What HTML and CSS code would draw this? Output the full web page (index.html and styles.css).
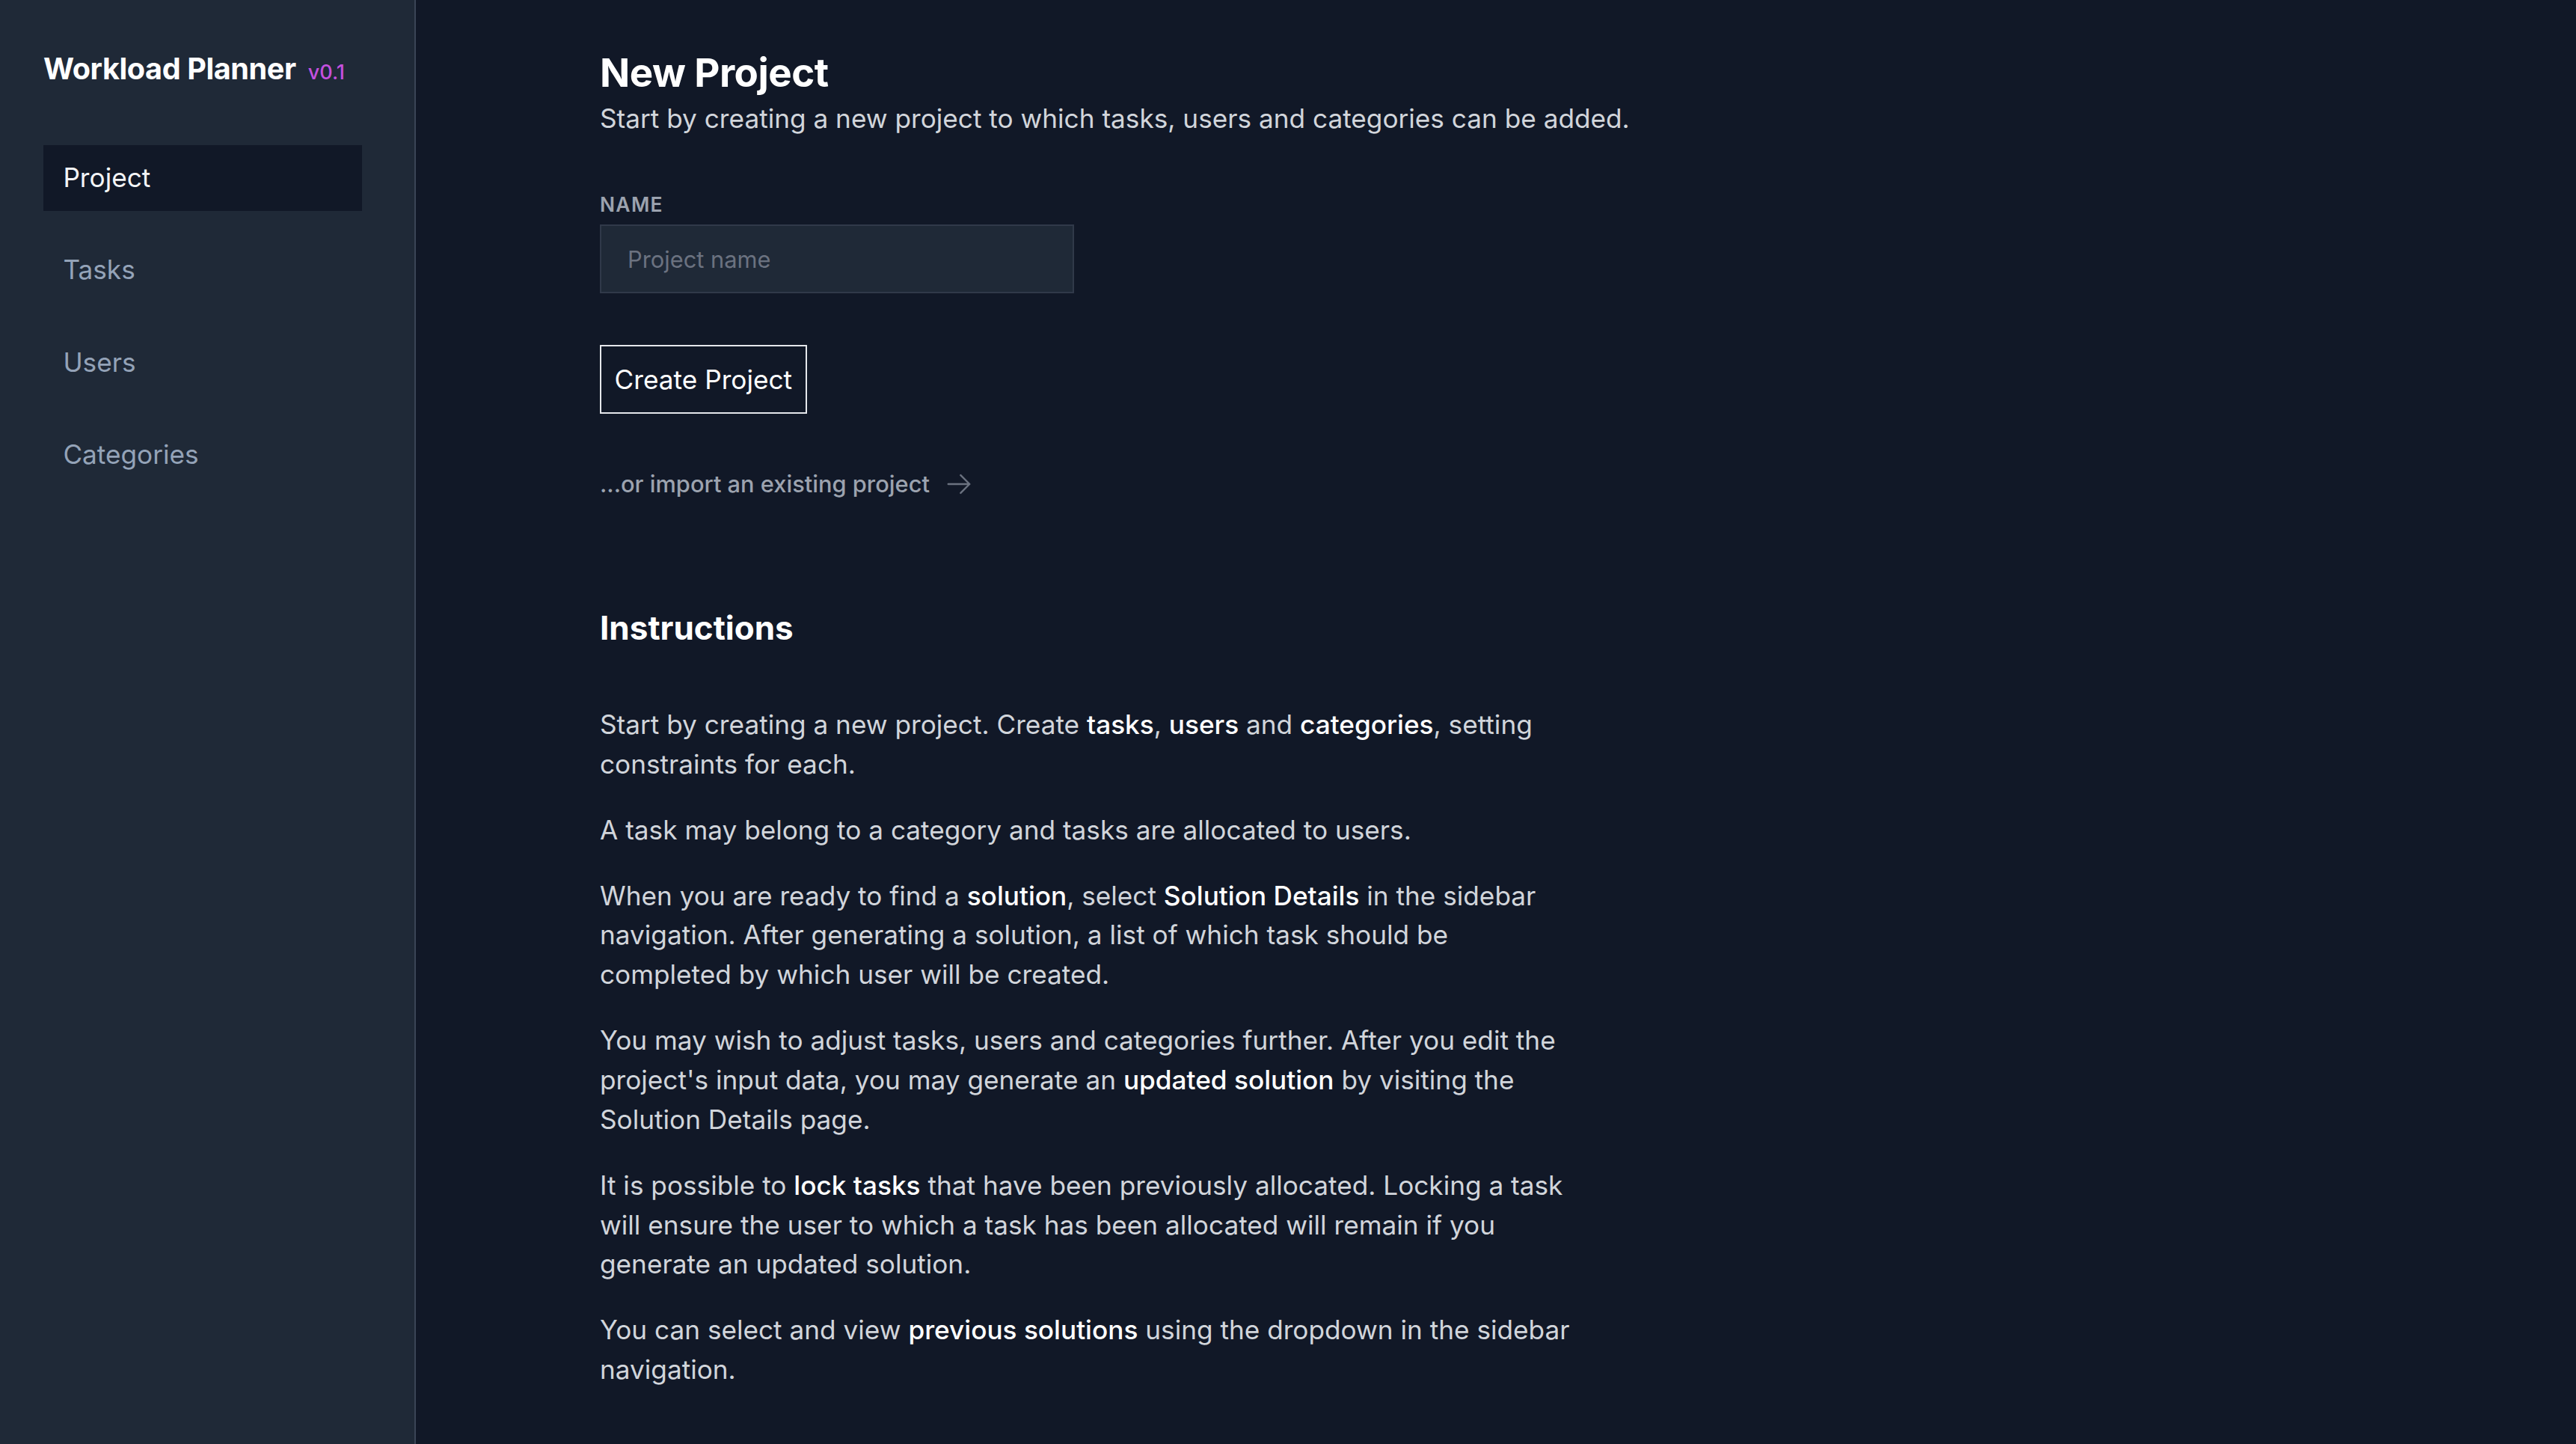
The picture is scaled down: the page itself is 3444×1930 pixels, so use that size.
FILE: index.html
```html
<!DOCTYPE html>
<html lang="en">
<head>
<meta charset="utf-8">
<title>Workload Planner</title>
<link rel="stylesheet" href="styles.css">
</head>
<body>
<div class="app">
  <aside class="sidebar">
    <div class="brand">
      <span class="brand-name">Workload Planner</span>
      <span class="brand-version">v0.1</span>
    </div>
    <nav class="nav">
      <a class="nav-item active">Project</a>
      <a class="nav-item">Tasks</a>
      <a class="nav-item">Users</a>
      <a class="nav-item">Categories</a>
    </nav>
  </aside>
  <main class="main">
    <h1 class="page-title">New Project</h1>
    <p class="page-subtitle">Start by creating a new project to which tasks, users and categories can be added.</p>

    <form class="form">
      <label class="field-label" for="project-name">Name</label>
      <input class="field-input" id="project-name" type="text" placeholder="Project name">
      <button class="btn" type="button">Create Project</button>
    </form>

    <a class="import-link">
      <span>...or import an existing project</span>
      <svg class="import-arrow" viewBox="0 0 24 24" fill="none" stroke="currentColor" stroke-width="1.5" stroke-linecap="round" stroke-linejoin="round"><path d="M13.5 4.5 21 12m0 0-7.5 7.5M21 12H3"/></svg>
    </a>

    <section class="instructions">
      <h2 class="section-title">Instructions</h2>
      <div class="prose">
        <p>Start by creating a new project. Create <strong>tasks</strong>, <strong>users</strong> and <strong>categories</strong>, setting constraints for each.</p>
        <p>A task may belong to a category and tasks are allocated to users.</p>
        <p>When you are ready to find a <strong>solution</strong>, select <strong>Solution Details</strong> in the sidebar navigation. After generating a solution, a list of which task should be completed by which user will be created.</p>
        <p>You may wish to adjust tasks, users and categories further. After you edit the project's input data, you may generate an <strong>updated solution</strong> by visiting the Solution Details page.</p>
        <p>It is possible to <strong>lock tasks</strong> that have been previously allocated. Locking a task will ensure the user to which a task has been allocated will remain if you generate an updated solution.</p>
        <p>You can select and view <strong>previous solutions</strong> using the dropdown in the sidebar navigation.</p>
      </div>
    </section>
  </main>
</div>
</body>
</html>
```

FILE: styles.css
```css
* { box-sizing: border-box; }

html, body {
  margin: 0;
  padding: 0;
  height: 100%;
}

body {
  background: #111827;
  font-family: Inter, "Noto Sans", "Liberation Sans", sans-serif;
  color: #d1d5db;
  overflow: hidden;
}

.app {
  display: flex;
  min-height: 100vh;
}

.sidebar {
  width: 556px;
  flex-shrink: 0;
  background: #1f2937;
  border-right: 2px solid #3a4455;
  padding: 62px 0 0 58px;
}

.brand {
  display: flex;
  align-items: baseline;
  line-height: 61.6px;
  margin-bottom: 66px;
}

.brand-name {
  font-size: 39.6px;
  font-weight: 700;
  color: #ffffff;
  letter-spacing: -0.01em;
}

.brand-version {
  font-size: 27px;
  font-weight: 500;
  color: #c450df;
  margin-left: 16px;
}

.nav {
  display: flex;
  flex-direction: column;
  gap: 35.2px;
  width: 426px;
}

.nav-item {
  display: block;
  font-size: 35.2px;
  line-height: 52.8px;
  padding: 17.6px 26.4px;
  color: #94a3b8;
  text-decoration: none;
}

.nav-item.active {
  background: #111827;
  color: #f3f4f6;
}

.main {
  flex: 1;
  padding: 62px 0 0 246px;
}

.page-title {
  margin: 0;
  font-size: 52.8px;
  line-height: 70.4px;
  font-weight: 700;
  color: #ffffff;
  letter-spacing: -0.01em;
}

.page-subtitle {
  margin: 0;
  font-size: 35.2px;
  line-height: 52.8px;
  color: #d1d5db;
  white-space: nowrap;
}

.form {
  display: flex;
  flex-direction: column;
  align-items: flex-start;
  margin-top: 71px;
}

.field-label {
  font-size: 26.4px;
  line-height: 35.2px;
  font-weight: 600;
  text-transform: uppercase;
  letter-spacing: 0.05em;
  color: #9ca3af;
}

.field-input {
  margin-top: 8.8px;
  width: 634px;
  height: 92px;
  background: #1f2937;
  border: 2px solid #303949;
  padding: 0 35px;
  font-family: inherit;
  font-size: 30.8px;
  color: #e5e7eb;
  outline: none;
}

.field-input::placeholder {
  color: #6b7280;
}

.btn {
  margin-top: 69px;
  background: transparent;
  border: 2px solid #e5e7eb;
  color: #ffffff;
  font-family: inherit;
  font-size: 35.2px;
  line-height: 52.8px;
  padding: 17.6px 17.6px;
}

.import-link {
  display: inline-flex;
  align-items: center;
  margin-top: 72px;
  font-size: 30.8px;
  line-height: 44px;
  font-weight: 500;
  color: #9ca3af;
  text-decoration: none;
}

.import-arrow {
  width: 38px;
  height: 38px;
  margin-left: 20px;
  color: #6b7280;
}

.instructions {
  margin-top: 140px;
}

.section-title {
  margin: 0 0 71px;
  font-size: 44px;
  line-height: 61.6px;
  font-weight: 700;
  color: #ffffff;
}

.prose {
  max-width: 1310px;
  display: flex;
  flex-direction: column;
  gap: 35.2px;
}

.prose p {
  margin: 0;
  font-size: 35.2px;
  line-height: 52.8px;
  color: #d1d5db;
}

.prose strong {
  font-weight: 500;
  color: #ffffff;
}
```
